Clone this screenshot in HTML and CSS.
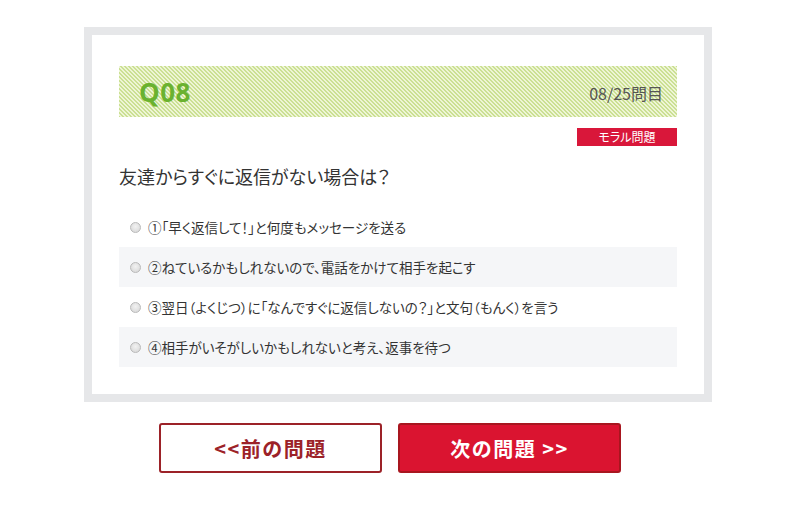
FILE: index.html
```html
<!DOCTYPE html>
<html lang="ja">
<head>
<meta charset="utf-8">
<link rel="stylesheet" href="styles.css">
</head>
<body>
<div class="frame">
  <div class="qhead">
    <span class="qno">Q08</span>
    <span class="qcount">08/25問目</span>
  </div>
  <div class="badge-row"><span class="badge">モラル問題</span></div>
  <p class="question">友達からすぐに返信がない場合は？</p>
  <ul class="options">
    <li class="opt"><span class="radio"></span><span>①「早く返信して！」と何度もメッセージを送る</span></li>
    <li class="opt alt"><span class="radio"></span><span>②ねているかもしれないので、電話をかけて相手を起こす</span></li>
    <li class="opt"><span class="radio"></span><span>③翌日（よくじつ）に「なんですぐに返信しないの？」と文句（もんく）を言う</span></li>
    <li class="opt alt"><span class="radio"></span><span>④相手がいそがしいかもしれないと考え、返事を待つ</span></li>
  </ul>
</div>
<div class="nav">
  <a class="btn prev">&lt;&lt;前の問題</a>
  <a class="btn next">次の問題 &gt;&gt;</a>
</div>
</body>
</html>
```
FILE: styles.css
```css
html, body { margin: 0; padding: 0; background: #fff; }
body {
  font-family: "Noto Sans CJK JP", "Noto Sans", sans-serif;
  color: #333;
  width: 800px;
  height: 520px;
  overflow: hidden;
}
.frame {
  box-sizing: border-box;
  width: 628px;
  height: 375px;
  margin: 27px 0 0 84px;
  border: 8px solid #e6e7e9;
  padding: 31px 27px 0 27px;
  background: #fff;
}
.qhead {
  height: 51px;
  display: flex;
  align-items: center;
  justify-content: space-between;
  padding: 0 14px 0 20px;
  background-color: #eef5d6;
  background-image: linear-gradient(45deg, #cbe093 25%, transparent 25%, transparent 50%, #cbe093 50%, #cbe093 75%, transparent 75%, transparent);
  background-size: 4px 4px;
}
.qno {
  font-family: "Open Sans", "Noto Sans", sans-serif;
  font-weight: 700;
  font-size: 26px;
  color: #6ab22f;
  letter-spacing: 0.5px;
}
.qcount {
  font-size: 16px;
  color: #555;
  padding-top: 2px;
}
.badge-row {
  display: flex;
  justify-content: flex-end;
  margin-top: 11px;
}
.badge {
  width: 100px;
  height: 18px;
  line-height: 18px;
  text-align: center;
  background: #d9173a;
  color: #fff;
  font-size: 12px;
  font-feature-settings: "palt";
}
.question {
  margin: 18px 0 19px 0;
  font-size: 18px;
  line-height: 24px;
  color: #333;
  font-feature-settings: "palt";
}
.options {
  list-style: none;
  margin: 0;
  padding: 0;
}
.opt {
  height: 40px;
  display: flex;
  align-items: center;
  font-size: 13.5px;
  color: #333;
  padding-left: 11px;
  font-feature-settings: "palt";
}
.opt.alt { background: #f5f6f8; }
.radio {
  box-sizing: border-box;
  width: 11px;
  height: 11px;
  border-radius: 50%;
  border: 1px solid #b9b9b9;
  background: radial-gradient(circle at 50% 40%, #f2f2f2, #d4d4d4);
  margin-right: 7px;
  flex: none;
}
.nav {
  display: flex;
  gap: 16px;
  margin: 21px 0 0 159px;
}
.btn {
  box-sizing: border-box;
  width: 223px;
  height: 50px;
  display: flex;
  align-items: center;
  justify-content: center;
  border-radius: 3px;
  font-weight: 700;
  font-size: 20px;
  text-decoration: none;
  letter-spacing: 1.5px;
}
.prev {
  border: 2px solid #9c2228;
  color: #9c2228;
  background: #fff;
}
.next {
  border: 2px solid #a8161f;
  background: #da1430;
  color: #fff;
}
```
